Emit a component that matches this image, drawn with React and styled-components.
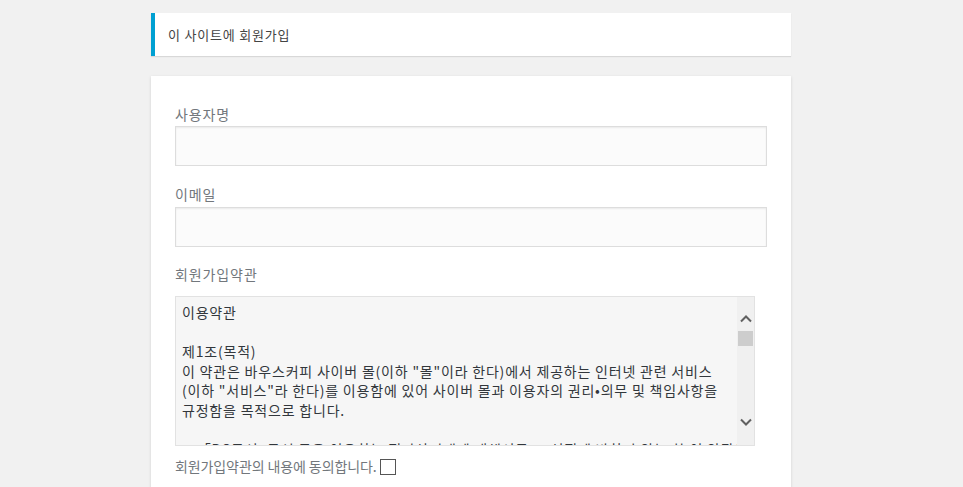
import React from "react";
import styled, { createGlobalStyle } from "styled-components";

const Global = createGlobalStyle`
  html, body { margin: 0; padding: 0; background: #f1f1f1; }
  body { font-family: "Noto Sans CJK KR", "Noto Sans", sans-serif; }
  * { box-sizing: border-box; }
`;

const Wrap = styled.div`
  width: 640px;
  margin: 13px 0 0 151px;
`;

const Message = styled.div`
  background: #fff;
  border-left: 4px solid #00a0d2;
  box-shadow: 0 1px 1px 0 rgba(0, 0, 0, 0.1);
  padding: 12px 13px;
  font-size: 13px;
  line-height: 19px;
  letter-spacing: 0.8px;
  color: #444;
`;

const Form = styled.form`
  margin-top: 20px;
  background: #fff;
  box-shadow: 0 1px 3px rgba(0, 0, 0, 0.13);
  padding: 28px 24px 46px;
`;

const Field = styled.div`
  margin-bottom: ${(p) => p.$mb ?? 18}px;
`;

const Label = styled.label`
  display: block;
  font-size: 14px;
  line-height: 21px;
  letter-spacing: 0.9px;
  color: #72777c;
  margin-bottom: ${(p) => p.$mb ?? 1}px;
`;

const Input = styled.input`
  display: block;
  width: 592px;
  height: 40px;
  margin: 0;
  padding: 3px;
  font-size: 24px;
  background: #fbfbfb;
  border: 1px solid #ddd;
  box-shadow: inset 0 1px 2px rgba(0, 0, 0, 0.07);
  outline: none;
`;

const TermsBox = styled.div`
  width: 580px;
  height: 150px;
  display: flex;
  border: 1px solid #e2e2e2;
  background: #f6f6f6;
`;

const TermsText = styled.textarea`
  flex: 1;
  border: none;
  background: transparent;
  padding: 6px;
  margin: 0;
  resize: none;
  overflow: hidden;
  font-family: "Noto Sans CJK KR", "Noto Sans", sans-serif;
  font-size: 14px;
  line-height: 19.6px;
  letter-spacing: 0.8px;
  color: #32373c;
  outline: none;
  white-space: pre;
`;

const ScrollBar = styled.div`
  width: 17px;
  background: #f0f0f0;
  display: flex;
  flex-direction: column;
  align-items: center;
`;

const ScrollBtn = styled.div`
  height: 34px;
  width: 100%;
  display: flex;
  justify-content: center;
  align-items: ${(p) => (p.$down ? "flex-start" : "flex-end")};
  padding: ${(p) => (p.$down ? "7px 0 0" : "0 0 8px")};
`;

const Thumb = styled.div`
  width: 15px;
  height: 15px;
  background: #cdcdcd;
`;

const Spacer = styled.div`
  flex: 1;
`;

const AgreeRow = styled.div`
  margin-top: 10px;
  display: flex;
  align-items: center;
`;

const AgreeLabel = styled.label`
  font-size: 14px;
  line-height: 21px;
  color: #72777c;
  letter-spacing: -0.1px;
`;

const Check = styled.input`
  appearance: none;
  margin: 0 0 0 3px;
  width: 16px;
  height: 16px;
  border: 1px solid #555;
  background: #fff;
  border-radius: 0;
`;

const Chevron = ({ down }) => (
  <svg width="12" height="8" viewBox="0 0 12 8">
    <path
      d={down ? "M1 1.5 L6 6.5 L11 1.5" : "M1 6.5 L6 1.5 L11 6.5"}
      fill="none"
      stroke="#606060"
      strokeWidth="2"
    />
  </svg>
);

const terms = `이용약관

제1조(목적)
이 약관은 바우스커피 사이버 몰(이하 "몰"이라 한다)에서 제공하는 인터넷 관련 서비스
(이하 "서비스"라 한다)를 이용함에 있어 사이버 몰과 이용자의 권리•의무 및 책임사항을
규정함을 목적으로 합니다.

※「PC통신, 무선 등을 이용하는 전자상거래에 대해서도 그 성질에 반하지 않는 한 이 약관을
준용합니다」

제2조(정의)
① "몰"이란 바우스커피가 재화 또는 용역(이하 "재화 등"이라 함)을 이용자에게`;

export default function App() {
  return (
    <>
      <Global />
      <Wrap>
        <Message>이 사이트에 회원가입</Message>
        <Form onSubmit={(e) => e.preventDefault()}>
          <Field>
            <Label htmlFor="user_login">사용자명</Label>
            <Input id="user_login" type="text" />
          </Field>
          <Field $mb={17}>
            <Label htmlFor="user_email" $mb={2}>이메일</Label>
            <Input id="user_email" type="email" />
          </Field>
          <Field $mb={0}>
            <Label $mb={11}>회원가입약관</Label>
            <TermsBox>
              <TermsText readOnly value={terms} />
              <ScrollBar>
                <ScrollBtn>
                  <Chevron />
                </ScrollBtn>
                <Thumb />
                <Spacer />
                <ScrollBtn $down>
                  <Chevron down />
                </ScrollBtn>
              </ScrollBar>
            </TermsBox>
          </Field>
          <AgreeRow>
            <AgreeLabel htmlFor="agree">회원가입약관의 내용에 동의합니다.</AgreeLabel>
            <Check id="agree" type="checkbox" />
          </AgreeRow>
        </Form>
      </Wrap>
    </>
  );
}
